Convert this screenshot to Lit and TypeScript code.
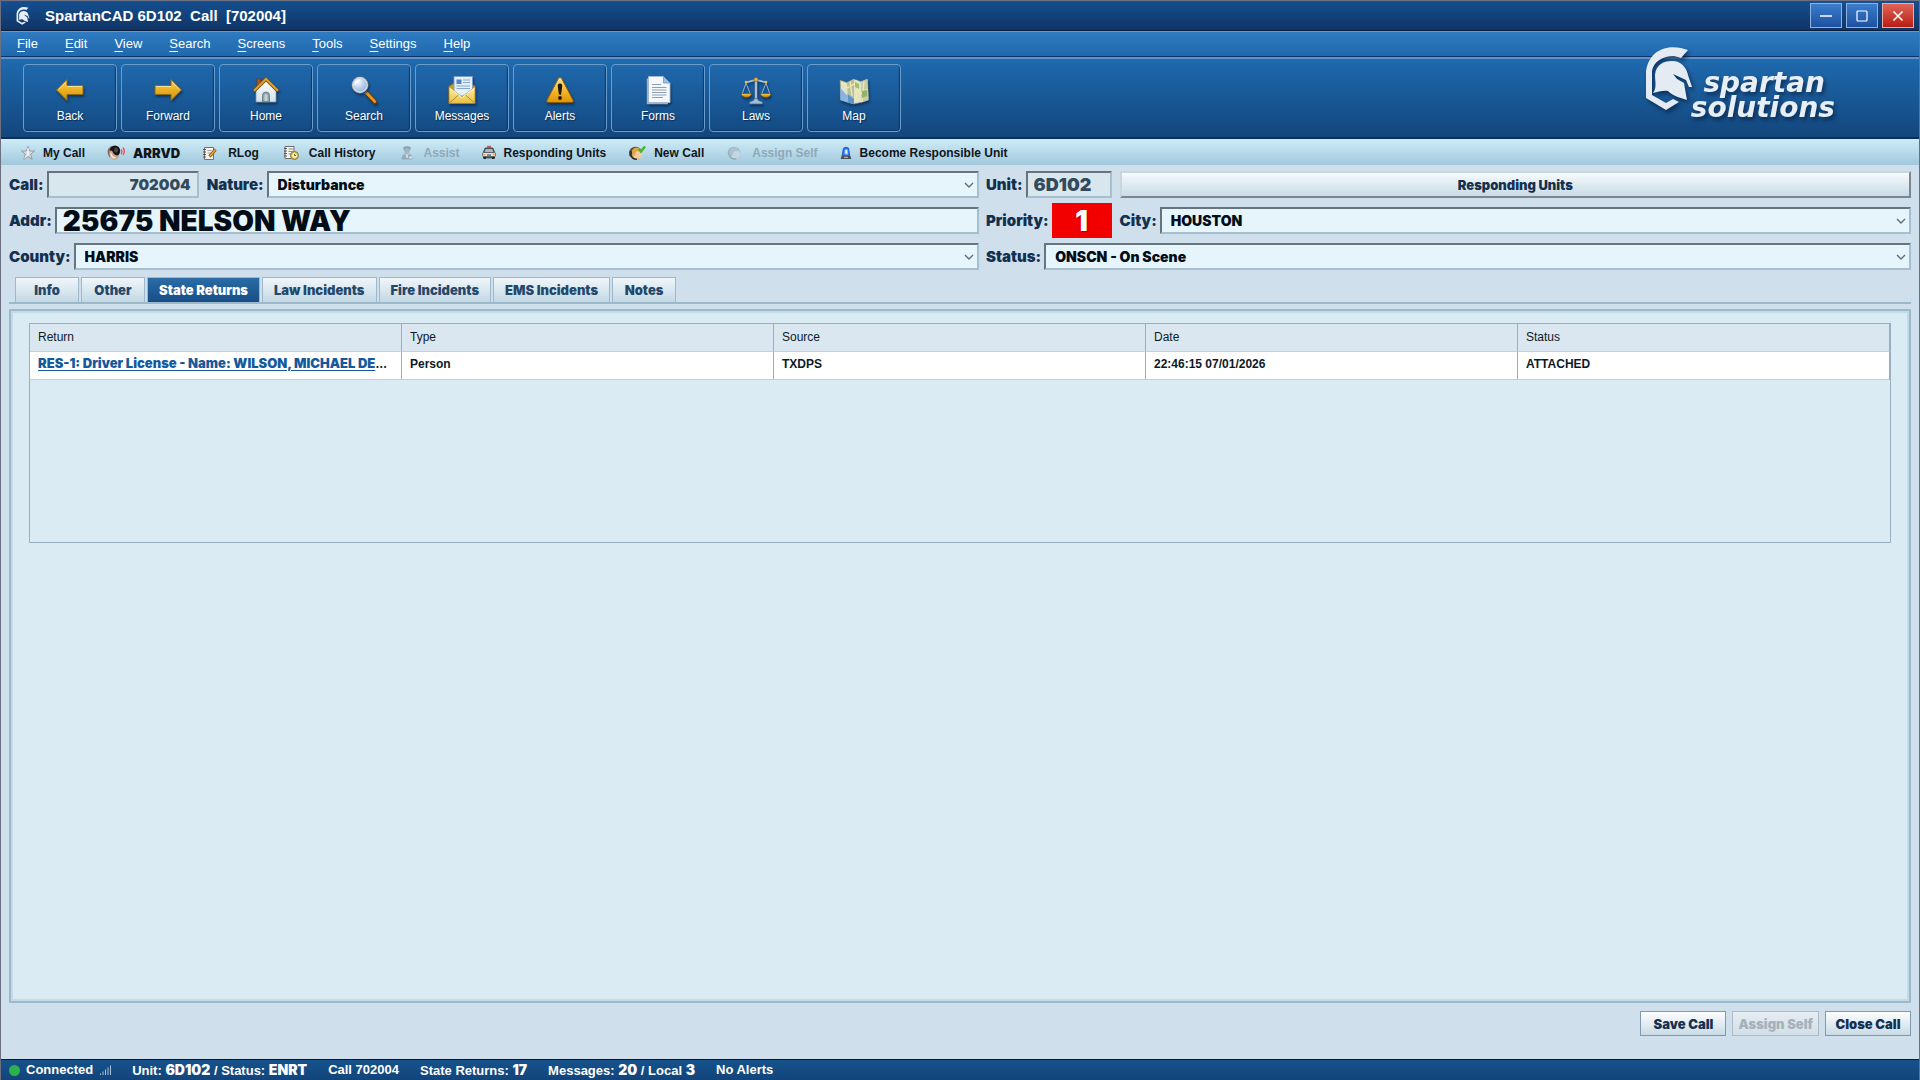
import { LitElement, html, svg, css, nothing, type TemplateResult } from "lit";
import { customElement, state } from "lit/decorators.js";
import { classMap } from "lit/directives/class-map.js";

/* ---------- large toolbar icons (28 x 28) ---------- */

const big = (body: unknown) => html`<svg class="big-icon" viewBox="0 0 28 28" aria-hidden="true">${body}</svg>`;

const bigIcons: Record<string, TemplateResult> = {
  back: big(svg`
    <defs><linearGradient id="gBack" x1="0" y1="0" x2="0" y2="1">
      <stop offset="0" stop-color="#f7d468"/><stop offset=".5" stop-color="#eab022"/><stop offset="1" stop-color="#d4920a"/>
    </linearGradient></defs>
    <path d="M.5 14 11 3.500 V9.500 H27 V18.500 H11 V24.500 Z" fill="url(#gBack)" stroke="#8a6a18" stroke-width="1"/>
    <path d="M2.500 13.500 10 6 M11.500 10.500H26" stroke="#fbe08c" stroke-width="1" fill="none"/>`),
  forward: big(svg`
    <defs><linearGradient id="gFwd" x1="0" y1="0" x2="0" y2="1">
      <stop offset="0" stop-color="#f7d468"/><stop offset=".5" stop-color="#eab022"/><stop offset="1" stop-color="#d4920a"/>
    </linearGradient></defs>
    <path d="M27.500 14 17 3.500 V9.500 H1 V18.500 H17 V24.500 Z" fill="url(#gFwd)" stroke="#8a6a18" stroke-width="1"/>
    <path d="M25.500 13.500 18 6 M2 10.500H17" stroke="#fbe08c" stroke-width="1" fill="none"/>`),
  home: big(svg`
    <defs><linearGradient id="gHome" x1="0" y1="0" x2="0" y2="1">
      <stop offset="0" stop-color="#ffffff"/><stop offset="1" stop-color="#d3e0ea"/>
    </linearGradient></defs>
    <rect x="5" y="3" width="4" height="8" fill="#b0521a" stroke="#7d3510" stroke-width=".7"/>
    <path d="M4 14 14 4 24 14 V26 H4 Z" fill="url(#gHome)" stroke="#7f98ab" stroke-width=".8"/>
    <path d="M2 15 14 3.200 26 15" fill="none" stroke="#7a4c08" stroke-width="3.400"/>
    <path d="M2 14.800 14 3 26 14.800" fill="none" stroke="#dfa033" stroke-width="2"/>
    <path d="M10.500 26V19.500a3.500 3.500 0 0 1 7 0V26Z" fill="#8da3a8" stroke="#5f7579" stroke-width=".8"/>
    <path d="M12.500 25v-5.500a1.500 1.500 0 0 1 3 0V25Z" fill="#c5d3cf"/>`),
  search: big(svg`
    <defs><radialGradient id="gLens" cx=".35" cy=".3" r=".8">
      <stop offset="0" stop-color="#ffffff"/><stop offset=".5" stop-color="#b6cfee"/><stop offset="1" stop-color="#7fa8dc"/>
    </radialGradient></defs>
    <path d="M15.500 16.500 18 19" stroke="#c9d3dc" stroke-width="3"/>
    <path d="M17.500 18 25 26" stroke="#6b3c05" stroke-width="4.600" stroke-linecap="round"/>
    <path d="M17.500 17.800 24.800 25.600" stroke="#e8961c" stroke-width="2.800" stroke-linecap="round"/>
    <circle cx="10" cy="9" r="8.200" fill="url(#gLens)" stroke="#5d6c7c" stroke-width="1"/>
    <circle cx="10" cy="9" r="7.200" fill="none" stroke="#cfd8e2" stroke-width="1.500"/>
    <path d="M5 9a5 5 0 0 1 5-4.500" stroke="#fff" stroke-width="1.200" fill="none"/>`),
  messages: big(svg`
    <defs><linearGradient id="gEnv" x1="0" y1="0" x2="0" y2="1">
      <stop offset="0" stop-color="#fff0a8"/><stop offset="1" stop-color="#e8bf45"/>
    </linearGradient></defs>
    <path d="M1 10 14 3 27 10V27.500H1Z" fill="#c99b2c" stroke="#8a6a18" stroke-width=".8"/>
    <path d="M6 .500H24.500V20H6Z" fill="#e4effa" stroke="#7c9cc0" stroke-width=".9"/>
    <rect x="8.500" y="3.500" width="5" height="4.500" fill="#4f86c6"/>
    <path d="M15 4h7M15 6.500h7M8.500 10h13.500M8.500 12.500h13.500" stroke="#86a6cb" stroke-width="1.200"/>
    <path d="M1 11 14 21 27 11V27.500H1Z" fill="url(#gEnv)" stroke="#a47d1c" stroke-width=".8"/>
    <path d="M1.500 27 11 18.500M26.500 27 17 18.500" stroke="#a9852a" stroke-width=".9"/>
    <path d="M1.500 11.800 14 21.600 26.500 11.800" stroke="#fffbe0" stroke-width=".9" fill="none"/>`),
  alerts: big(svg`
    <defs><linearGradient id="gWarn" x1="0" y1="0" x2="0" y2="1">
      <stop offset="0" stop-color="#ffe48a"/><stop offset=".6" stop-color="#f2b224"/><stop offset="1" stop-color="#dc9206"/>
    </linearGradient></defs>
    <path d="M14 1.500c.8 0 1.400.4 1.800 1.200L27 24c.7 1.500 0 2.500-1.500 2.500h-23C1 26.500.3 25.500 1 24L12.200 2.700c.4-.8 1-1.200 1.800-1.200Z" fill="url(#gWarn)" stroke="#8b5a05" stroke-width="1"/>
    <path d="M14 7.500c1.600 0 2.400 1 2.200 2.700l-1 7.500c-.2 1.600-2.200 1.600-2.400 0l-1-7.500c-.2-1.700.6-2.700 2.200-2.700Z" fill="#20160a"/>
    <circle cx="14" cy="22" r="1.900" fill="#20160a"/>`),
  forms: big(svg`
    <path d="M3.500 2.500V27.500H24" fill="none" stroke="#9fb2c8" stroke-width="1.500"/>
    <path d="M4.500 .500H19.500L26 7V26.500H4.500Z" fill="#f4f7fb" stroke="#a9bacd" stroke-width=".9"/>
    <path d="M19.500 .500V7H26Z" fill="#9cc0ea" stroke="#7597bf" stroke-width=".8"/>
    <path d="M8 8.500h9M8 11.500h14.500M8 14h14.500M8 16.500h14.500M8 19h14.500M8 21.500h11" stroke="#8f9fb2" stroke-width="1"/>`),
  laws: big(svg`
    <defs><linearGradient id="gPan" x1="0" y1="0" x2="0" y2="1">
      <stop offset="0" stop-color="#ffd04a"/><stop offset="1" stop-color="#b96d06"/>
    </linearGradient></defs>
    <path d="M14 2V24" stroke="#5e7690" stroke-width="3"/>
    <path d="M14 2V24" stroke="#c2d2e4" stroke-width="1.600"/>
    <path d="M3.500 6C8 6.500 10 3.500 14 4.500 18 3.500 20 6.500 24.500 6" fill="none" stroke="#a9bdd2" stroke-width="1.800"/>
    <circle cx="14" cy="3.500" r="2" fill="#f3bb3c" stroke="#7c560c" stroke-width=".6"/>
    <circle cx="4" cy="6" r="1.300" fill="#f3bb3c"/><circle cx="24" cy="6" r="1.300" fill="#f3bb3c"/>
    <path d="M4 7 0 18.500M4 7 8.500 18.500M24 7 19.500 18.500M24 7 28 18.500" stroke="#b9c6d2" stroke-width=".8"/>
    <path d="M-1 17.500H9.500C9 23 0 23-1 17.500Z" fill="url(#gPan)" stroke="#6e4606" stroke-width=".6"/>
    <path d="M18.500 17.500H29C28.500 23 19 23 18.500 17.500Z" fill="url(#gPan)" stroke="#6e4606" stroke-width=".6"/>
    <path d="M12.500 22.500h3c.3 2 2 2.500 5 3.500V28H7.500v-2c3-1 4.700-1.500 5-3.500Z" fill="#9fbbda" stroke="#4a688a" stroke-width=".7"/>`),
  map: big(svg`
    <path d="M0 4 7 6.500 14 3 21 5.500 27.500 3 28.500 24 21 26.500 14 28 8 26.500 .500 24Z" fill="#dfe3cc" stroke="#72806a" stroke-width=".7"/>
    <path d="M7 6.500 14 3 14 28 8 26.500Z" fill="#b9bf9c"/>
    <path d="M21 5.500 27.500 3 28.500 24 21 26.500Z" fill="#c8caa8"/>
    <path d="M.300 12 7.600 20 8 26.500 .500 24Z" fill="#86b4e4"/><path d="M7.600 18 14 23V28L8 26.500Z" fill="#5f93c8"/>
    <path d="M1.500 6 7.500 12 14 8 20.500 18 27.500 13M10 5.500 12 20M17 4.500 16 24M24 5 22 26" fill="none" stroke="#f3eaa4" stroke-width="1.300"/>
    <path d="M15 6l4 2v5l-4-2Z" fill="#9cc07c"/><path d="M22 15l5-1v6l-5 2Z" fill="#8fb370"/>`),
};

/* ---------- small action icons ---------- */

const small = (w: number, body: unknown) =>
  html`<svg width=${w} height="16" viewBox=${`0 0 ${w} 16`} aria-hidden="true">${body}</svg>`;

const smallIcons: Record<string, TemplateResult> = {
  star: small(14, svg`<path d="M7 1.500 8.600 6H13.500L9.700 9.200 11.200 14.500 7 11.500 2.800 14.500 4.300 9.200.500 6H5.400Z" fill="#d8dcdf" stroke="#8f9599" stroke-width=".9" stroke-linejoin="round"/><path d="M7 3V10L3.500 13" fill="none" stroke="#fff" stroke-width="1"/>`),
  siren: small(18, svg`<path d="M1 4Q4 0 8 1L7 5 3 8V13Q-.500 9 1 4Z" fill="#8a6a58"/><ellipse cx="8" cy="6" rx="5.200" ry="5.500" fill="#171515"/><path d="M2.500 6Q5 4.500 6 7.500 7.500 11 12 10.500 11.500 14.500 6.500 15 1.500 13 2.500 6Z" fill="#c9a58c"/><path d="M3.500 7.500Q4.800 7.500 5 9.500 6 12.500 9.500 12.500 8 14 6 13.500 3 12 3.500 7.500Z" fill="#f3e8de"/><ellipse cx="9" cy="5" rx="2" ry="2.500" fill="#4a4340"/><path d="M14 4.500q1.800 2 0 4.500M16 2.500q2.600 3.500 0 7.500" fill="none" stroke="#f0525a" stroke-width="1.400"/>`),
  log: small(18, svg`<path d="M2.500 2.500h9v12h-9Z" fill="#f7f5f0" stroke="#77716a" stroke-width="1"/><path d="M1 4.500h3M1 7h3M1 9.500h3M1 12h3" stroke="#555" stroke-width="1"/><path d="M5.500 5.500h4M5.500 8h3" stroke="#a5a09a"/><path d="M13.500 4.500 7.500 11.500" stroke="#7b4a14" stroke-width="3"/><path d="M13.300 4.700 8 11" stroke="#f0a63c" stroke-width="1.600"/>`),
  history: small(20, svg`<g transform="translate(2)"><path d="M2 1.500h9v12H2Z" fill="#f5f5f2" stroke="#6e6a66" stroke-width="1"/><path d="M1 3.500h3M1 6h3M1 8.500h3M1 11h3" stroke="#555" stroke-width="1"/><path d="M5.500 4h5M5.500 6.500h5M5.500 9h3" stroke="#8d8a86"/><circle cx="11.500" cy="10.500" r="4" fill="#f2c14a" stroke="#6c7d4e" stroke-width="1"/><circle cx="11.500" cy="10.500" r="2.300" fill="#fdf3cf"/><path d="M11.500 9v1.500h1.500" stroke="#6a4c10" stroke-width=".9" fill="none"/></g>`),
  officer: small(18, svg`<g opacity=".8"><path d="M5 2.500Q9 0 13 2.500L12 5.500H6Z" fill="#7f929f"/><circle cx="9" cy="6" r="2.800" fill="#9fb0bb"/><path d="M3.500 14.500c0-4 2-6 5.500-6s5.500 2 5.500 6Z" fill="#8fa2ae"/><path d="M8 9l1 4 1-4" stroke="#dbe6ec" fill="none"/><path d="M11 11.500h3v2h-3Z" fill="#dbe6ec"/></g>`),
  car: small(14, svg`<path d="M5 .800h4v2H5Z" fill="#c25b5b"/><path d="M3 3h8l1.500 4v6h-11V7Z" fill="#5a5f66" stroke="#34383d" stroke-width=".7"/><path d="M3.800 4h6.400l1 3H2.800Z" fill="#a9b8c4"/><rect x=".5" y="7.500" width="13" height="4" rx="1" fill="#dfe3e6" stroke="#43474c" stroke-width=".7"/><path d="M1 9.500h2.500M10.500 9.500h2.500" stroke="#e8a860" stroke-width="1.400"/><path d="M5 10h4" stroke="#4c5157" stroke-width="1.200"/><path d="M1.500 12h2.500v2H1.500ZM10 12h2.500v2H10Z" fill="#22262a"/>`),
  newCall: small(18, svg`<circle cx="7.500" cy="8" r="6.300" fill="#5a4028"/><circle cx="9.300" cy="9" r="5" fill="#f2cf9a"/><path d="M3.500 6Q6 1 11 3L13 6 8 6.500 6.500 10.500 4 11.500Z" fill="#dba54c"/><path d="M1.500 6.500v4.500l2.500 1.500V6Z" fill="#33373c"/><path d="M4 12.500q2 2.200 5 1.700" stroke="#2c2f33" fill="none" stroke-width="1.200"/><path d="M10.800 4 13 6.500 17 1.500" stroke="#4db52c" stroke-width="2.600" fill="none"/>`),
  assign: small(18, svg`<g opacity=".7"><circle cx="8" cy="8" r="6.300" fill="#8fa3b0"/><circle cx="9.300" cy="9" r="4.800" fill="#cbd9e2"/><path d="M3.500 6Q6 1 11 3L13 6 8 6.500 6.500 10.500 4 11.500Z" fill="#a9bac5"/><path d="M5 13q2 1.500 5 1" stroke="#768994" fill="none"/></g>`),
  light: small(12, svg`<path d="M3.500 3Q6 1.500 8.500 3L9.800 11H2Z" fill="#2378f2" stroke="#1650c4" stroke-width=".8"/><path d="M4.800 4.500h2.800L8 9.500H4.500Z" fill="#8fc4ff"/><path d="M5.500 5h1.500v3.500H5.500Z" fill="#f2f9ff"/><path d="M1.500 11h9l.8 3H.700Z" fill="#4a4f57"/><path d="M4 12.300h4" stroke="#c4c9cf"/>`),
};

const helmet = svg`
  <path d="M43 3C28 -3 5 -1 1 24V51L21 63 34 55 28 52 21 56 7 48V24C9 12 24 6 36 11Z"/>
  <path d="M10 28C11 18 18 14 27 14 37 14 42 22 43 28L47 40H44L41 33 28 27 32 32 39 36 42 53C33 50 28 49 23 44 18 43 13 45 8 46 12 41 10 34 10 28Z"/>`;

const chevron = html`<svg class="chevron" viewBox="0 0 10 6" aria-hidden="true"><path d="M1 1 5 5 9 1" fill="none" stroke="#5f6f7a" stroke-width="1.400"/></svg>`;

const menus = ["File", "Edit", "View", "Search", "Screens", "Tools", "Settings", "Help"];

const tools = [
  ["back", "Back"], ["forward", "Forward"], ["home", "Home"], ["search", "Search"], ["messages", "Messages"],
  ["alerts", "Alerts"], ["forms", "Forms"], ["laws", "Laws"], ["map", "Map"],
];

interface Action { icon: string; label: string; disabled?: boolean; heavy?: boolean }
const actions: Action[] = [
  { icon: "star", label: "My Call" },
  { icon: "siren", label: "ARRVD", heavy: true },
  { icon: "log", label: "RLog" },
  { icon: "history", label: "Call History" },
  { icon: "officer", label: "Assist", disabled: true },
  { icon: "car", label: "Responding Units" },
  { icon: "newCall", label: "New Call" },
  { icon: "assign", label: "Assign Self", disabled: true },
  { icon: "light", label: "Become Responsible Unit" },
];

const tabs = ["Info", "Other", "State Returns", "Law Incidents", "Fire Incidents", "EMS Incidents", "Notes"];

const columns = ["Return", "Type", "Source", "Date", "Status"];
const returns = [
  { title: "RES-1: Driver License - Name: WILSON, MICHAEL DE", type: "Person", source: "TXDPS", date: "22:46:15 07/01/2026", status: "ATTACHED" },
];

@customElement("app-root")
export class AppRoot extends LitElement {
  @state() private tab = "State Returns";

  static styles = css`
    :host {
      --heavy: Inter, "Liberation Sans", sans-serif;
      --edge-dark: #66747e;
      --edge-light: #a5bfcf;
      --line: #9bb9ca;
      display: flex;
      flex-direction: column;
      min-height: 100vh;
      box-sizing: border-box;
      border: 1px solid #6c7080;
      border-bottom: 0;
      background: #cfe0ec;
      color: #0c1a28;
      font: 12px/16px "Liberation Sans", Arial, sans-serif;
    }
    * { box-sizing: border-box; }
    button, input, select { font: inherit; color: inherit; margin: 0; border-radius: 0; }
    button { cursor: pointer; }
    svg { display: block; flex: none; }

    .titlebar {
      display: flex; align-items: center; gap: 15px;
      height: 30px; padding: 0 5px 0 15px;
      background: linear-gradient(#15508f, #0f3467);
      border-bottom: 1px solid #081c3a;
      color: #fff;
    }
    .title { margin: 0; font-size: 15px; line-height: 20px; font-weight: bold; white-space: pre; }
    .app-mark { fill: #e8eef5; }
    .window-buttons { display: flex; gap: 4px; margin-left: auto; }
    .win {
      display: grid; place-items: center; width: 32px; height: 25px; padding: 0;
      border: 1px solid #8db2e0; background: linear-gradient(#3c7dcc, #1c51a0);
    }
    .win.close { border-color: #eeaaa4; background: linear-gradient(#df655a, #b81d12); }

    .header { position: relative; color: #fff; }
    .menubar {
      display: flex; gap: 27px; height: 26px; padding: 0 16px; align-items: center;
      border-top: 1px solid #5f9bd4; border-bottom: 1px solid #0f3467;
      background: linear-gradient(#2f7ac0, #2069af);
      font-size: 13px;
    }
    .menubar button { padding: 0; border: 0; background: none; }
    .menubar u { text-underline-offset: 3px; }
    .toolbar {
      display: flex; gap: 4px; height: 82px; padding: 5px 22px 0;
      border-top: 2px solid #5f92c8; border-bottom: 2px solid #0c2f5c;
      background: linear-gradient(#1f6aaf, #13467c);
    }
    .tool {
      display: flex; flex-direction: column; align-items: center; gap: 4px;
      width: 94px; height: 68px; padding: 11px 0 0;
      border: 1px solid #6a9ccc; border-radius: 4px;
      background: linear-gradient(#1f68ac, #144b84);
      box-shadow: inset -1px -1px 1px #0e3868;
      color: #fff; text-shadow: 1px 1px 1px #0a2c54;
    }
    .big-icon { width: 28px; height: 28px; overflow: visible; filter: drop-shadow(1px 2px 1px rgba(4, 24, 52, .55)); }
    .brand {
      position: absolute; top: 16px; right: 84px;
      display: flex; color: #e8eef5;
      filter: drop-shadow(2px 3px 2px rgba(4, 26, 56, .65));
    }
    .brand svg { width: 48px; height: 64px; fill: #e5ebf2; margin-right: -2px; }
    .brand-name { padding-top: 23px; font: italic bold 28px/25px "DejaVu Sans", Verdana, sans-serif; text-align: right; }
    .brand-name span { display: block; }
    .brand-name .first { padding-right: 10px; }

    .actions {
      display: flex; gap: 22px; height: 26px; padding: 1px 20px 0; align-items: center;
      background: linear-gradient(#cfecf8, #a1c8dc);
      font-weight: bold;
    }
    .action { display: flex; align-items: center; gap: 8px; padding: 0; border: 0; background: none; color: #10161c; white-space: nowrap; }
    .action:disabled { color: #8fa9b8; cursor: default; }
    .heavy { font-family: var(--heavy); font-weight: 900; }
    .action.heavy { font-size: 13px; }

    main { flex: 1; display: flex; flex-direction: column; padding: 2px 8px 0; }
    .fields { display: grid; grid-template-columns: 51% minmax(0, 1fr); gap: 1px 7px; }
    .row { display: flex; align-items: center; gap: 3px; height: 35px; }
    .row label, .priority-label { font: 900 15px/20px var(--heavy); color: #14304f; white-space: nowrap; }
    .next { margin-left: 5px; }
    .box {
      height: 27px; min-width: 0;
      border: 2px solid; border-color: var(--edge-dark) var(--edge-light) var(--edge-light) var(--edge-dark);
      background: #e6f4fb; color: #020d18;
    }
    .box.fill { flex: 1; }
    input.box { padding: 0 6px; font-family: var(--heavy); font-weight: 900; outline: none; }
    input.box:disabled { background: #d8e6ee; color: #33495c; }
    .call-no { width: 152px; text-align: right; font-size: 15px; }
    .unit-no { width: 86px; font-size: 18px; }
    .address { font-size: 28px; }
    .select { position: relative; display: flex; }
    .select select {
      appearance: none; flex: 1; min-width: 0; padding: 0 20px 0 9px;
      border: 0; background: none; font: 900 14px/20px var(--heavy); outline: none;
    }
    .chevron { position: absolute; right: 3px; top: 9px; width: 10px; height: 6px; pointer-events: none; }
    .responding {
      flex: 1; height: 27px; padding: 0;
      border: 2px solid; border-color: #c8d6e0 #7d868e #7d868e #c8d6e0;
      background: linear-gradient(#f6fafd, #c9dbe6);
      font: 900 13px/16px var(--heavy); color: #14304f;
    }
    .priority {
      display: grid; place-items: center; width: 60px; height: 35px;
      background: #f20000; color: #fff; font: 900 28px/30px var(--heavy);
      text-shadow: 1px 1px 1px #900;
    }

    .tabs { display: flex; gap: 2px; margin-top: 3px; padding-left: 6px; border-bottom: 2px solid var(--line); }
    .tab {
      min-width: 64px; height: 25px; padding: 0 11px;
      border: 1px solid var(--line); border-bottom: 0;
      background: linear-gradient(#f0f6fa, #c3d8e4);
      font: 900 13px/16px var(--heavy); color: #24486a;
    }
    .tab.active { background: linear-gradient(#2b6ba6, #174e86); color: #fff; }
    .panel {
      flex: 1; margin-top: 5px; padding: 12px 18px;
      border: 2px solid var(--line); box-shadow: inset 0 0 0 2px #c5dbe7;
      background: #daebf4;
    }
    .grid { height: 220px; border: 1px solid #98afc2; }
    table { width: 100%; border-collapse: separate; border-spacing: 0; table-layout: fixed; }
    th, td {
      height: 28px; padding: 0 0 2px 8px; text-align: left;
      border-right: 1px solid #98afc2; border-bottom: 1px solid #c3d0dc;
      overflow: hidden; white-space: nowrap;
    }
    th { font-weight: normal; background: #dbe7f0; }
    td { font-weight: bold; background: #fff; padding-bottom: 4px; }
    td a { font: 900 13px/16px var(--heavy); color: #14599c; text-underline-offset: 2px; }

    .footer { display: flex; justify-content: flex-end; gap: 6px; padding: 8px 0 23px; }
    .footer button {
      min-width: 86px; height: 25px; padding: 0 5px;
      border: 1px solid #8299ab; background: linear-gradient(#fdfeff, #c9dae5);
      font: 900 13px/16px var(--heavy); color: #14304f;
    }
    .footer button:disabled { color: #a5b1bb; border-color: #aebac4; background: linear-gradient(#e6edf3, #d3dfe8); }

    .statusbar {
      display: flex; align-items: center; gap: 21px; height: 21px; padding: 0 8px;
      border-top: 1px solid #06182e; background: linear-gradient(#16528c, #12447a);
      color: #fff; font-size: 13px; font-weight: bold; white-space: nowrap;
    }
    .statusbar .heavy { font-size: 14px; }
    .conn { display: flex; align-items: center; gap: 6px; }
    .dot { width: 11px; height: 11px; border-radius: 50%; background: #2bb24c; }
  `;

  private field(id: string, label: string, value: string, cls = "") {
    return html`
      <label class=${cls} for=${id}>${label}</label>
      <div class="box fill select">
        <select id=${id}><option selected>${value}</option></select>
        ${chevron}
      </div>`;
  }

  render() {
    return html`
      <header class="titlebar">
        <svg class="app-mark" width="14" height="18" viewBox="0 0 48 64" aria-hidden="true">${helmet}</svg>
        <h1 class="title">SpartanCAD 6D102  Call  [702004]</h1>
        <div class="window-buttons">
          <button class="win" aria-label="Minimize"><svg width="12" height="12" viewBox="0 0 12 12"><path d="M0 6H12" stroke="#fff" stroke-width="1.500"/></svg></button>
          <button class="win" aria-label="Maximize"><svg width="12" height="12" viewBox="0 0 12 12"><rect x="1" y="1" width="10" height="10" rx="1" fill="none" stroke="#fff" stroke-width="1.200"/></svg></button>
          <button class="win close" aria-label="Close"><svg width="12" height="12" viewBox="0 0 12 12"><path d="M1.500 1.500 10.500 10.500M10.500 1.500 1.500 10.500" stroke="#fff" stroke-width="1.600"/></svg></button>
        </div>
      </header>

      <div class="header">
        <nav class="menubar">
          ${menus.map((m) => html`<button><u>${m[0]}</u>${m.slice(1)}</button>`)}
        </nav>
        <div class="toolbar">
          ${tools.map(([icon, label]) => html`<button class="tool">${bigIcons[icon]}<span>${label}</span></button>`)}
        </div>
        <div class="brand">
          <svg viewBox="0 0 48 64" aria-hidden="true">${helmet}</svg>
          <div class="brand-name"><span class="first">spartan</span><span>solutions</span></div>
        </div>
      </div>

      <div class="actions">
        ${actions.map((a) => html`
          <button class=${classMap({ action: true, heavy: !!a.heavy })} ?disabled=${a.disabled}>
            ${smallIcons[a.icon]}<span>${a.label}</span>
          </button>`)}
      </div>

      <main>
        <div class="fields">
          <div class="row">
            <label for="call">Call:</label>
            <input id="call" class="box call-no" value="702004" disabled />
            ${this.field("nature", "Nature:", "Disturbance", "next")}
          </div>
          <div class="row">
            <label for="unit">Unit:</label>
            <input id="unit" class="box unit-no" value="6D102" disabled />
            <button class="responding next">Responding Units</button>
          </div>
          <div class="row">
            <label for="addr">Addr:</label>
            <input id="addr" class="box fill address" value="25675 NELSON WAY" />
          </div>
          <div class="row">
            <span class="priority-label">Priority:</span>
            <span class="priority">1</span>
            ${this.field("city", "City:", "HOUSTON", "next")}
          </div>
          <div class="row">${this.field("county", "County:", "HARRIS")}</div>
          <div class="row">${this.field("status", "Status:", "ONSCN - On Scene")}</div>
        </div>

        <div class="tabs" role="tablist">
          ${tabs.map((t) => html`
            <button role="tab" aria-selected=${t === this.tab ? "true" : "false"}
              class=${classMap({ tab: true, active: t === this.tab })}
              @click=${() => (this.tab = t)}>${t}</button>`)}
        </div>

        <section class="panel">
          ${this.tab === "State Returns" ? html`
            <div class="grid">
              <table>
                <thead><tr>${columns.map((c) => html`<th>${c}</th>`)}</tr></thead>
                <tbody>
                  ${returns.map((r) => html`
                    <tr>
                      <td><a href="#">${r.title}</a>…</td>
                      <td>${r.type}</td><td>${r.source}</td><td>${r.date}</td><td>${r.status}</td>
                    </tr>`)}
                </tbody>
              </table>
            </div>` : nothing}
        </section>

        <div class="footer">
          <button>Save Call</button>
          <button disabled>Assign Self</button>
          <button>Close Call</button>
        </div>
      </main>

      <footer class="statusbar">
        <span class="conn">
          <span class="dot"></span>Connected
          <svg width="12" height="10" viewBox="0 0 12 10" aria-hidden="true"><path d="M1.500 10V8.500M4 10V6.500M6.500 10V4.500M9 10V2.500M11.500 10V.500" stroke="#a9c0d8" stroke-width="1"/></svg>
        </span>
        <span>Unit: <b class="heavy">6D102</b> / Status: <b class="heavy">ENRT</b></span>
        <span>Call 702004</span>
        <span>State Returns: <b class="heavy">17</b></span>
        <span>Messages: <b class="heavy">20</b> / Local <b class="heavy">3</b></span>
        <span>No Alerts</span>
      </footer>
    `;
  }
}
